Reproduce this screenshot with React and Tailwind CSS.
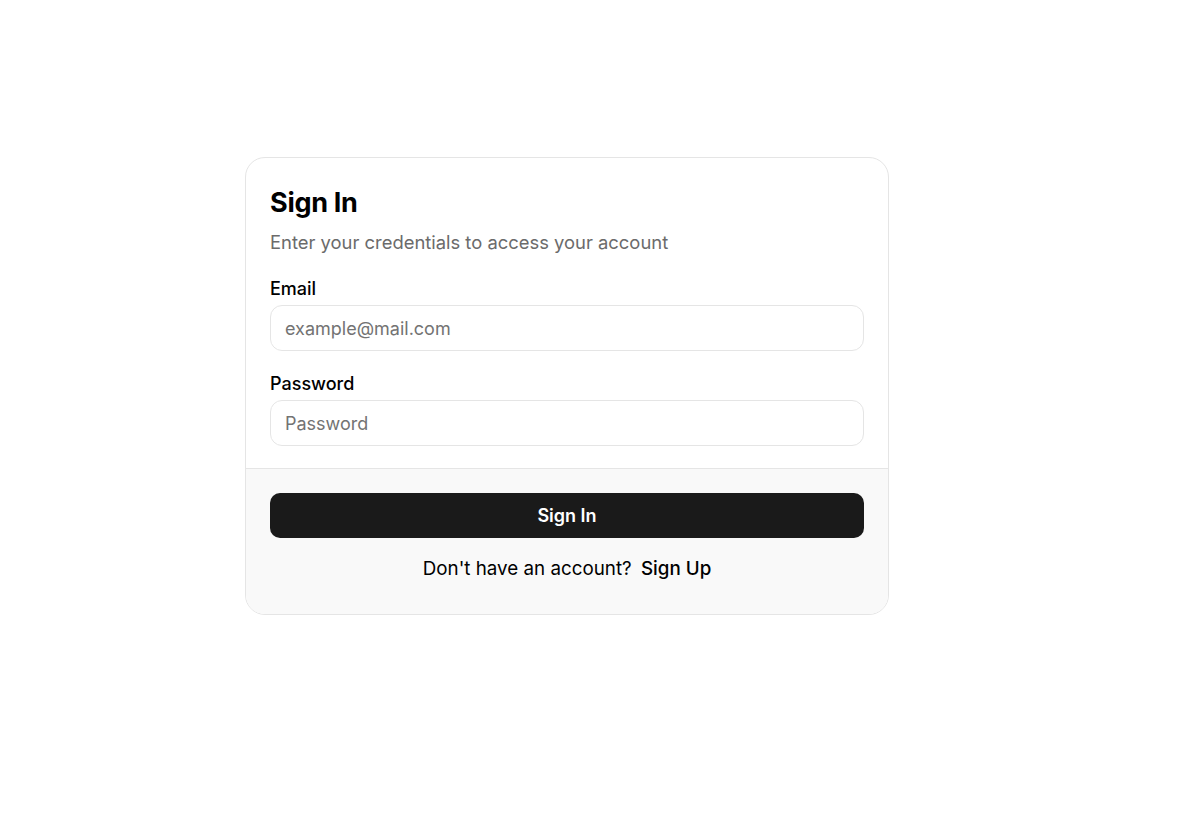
import React, { useState } from "react";

const App = () => {
  const [email, setEmail] = useState("");
  const [password, setPassword] = useState("");

  const handleSubmit = (e) => {
    e.preventDefault();
  };

  return (
    <div
      className="min-h-screen bg-white pt-[157px] pl-[245px]"
      style={{ fontFamily: "Inter, 'Noto Sans', sans-serif" }}
    >
      <form
        onSubmit={handleSubmit}
        className="w-[644px] bg-white border border-[#e5e5e5] rounded-[20px] overflow-hidden"
      >
        <div className="px-6 pt-[27px] pb-[22px]">
          <h2 className="text-[27px] leading-[36px] font-bold tracking-[-0.3px] text-black">Sign In</h2>
          <p className="mt-[7px] text-[18.4px] leading-[28px] text-[#6b6b6b]">
            Enter your credentials to access your account
          </p>

          <label className="block mt-[19px] text-[18px] leading-[28px] font-medium text-black">
            Email
          </label>
          <input
            type="email"
            value={email}
            onChange={(e) => setEmail(e.target.value)}
            placeholder="example@mail.com"
            className="mt-[2px] w-full h-[46px] px-[14px] text-[18px] border border-[#e5e5e5] rounded-[12px] placeholder:text-[#737373] focus:outline-none"
          />

          <label className="block mt-[19px] text-[18px] leading-[28px] font-medium text-black">
            Password
          </label>
          <input
            type="password"
            value={password}
            onChange={(e) => setPassword(e.target.value)}
            placeholder="Password"
            className="mt-[2px] w-full h-[46px] px-[14px] text-[18px] border border-[#e5e5e5] rounded-[12px] placeholder:text-[#737373] focus:outline-none"
          />
        </div>

        <div className="border-t border-[#e5e5e5] bg-[#f9f9f9] px-6 pt-6 pb-[31px]">
          <button
            type="submit"
            className="w-full h-[45px] bg-[#1a1a1a] text-white text-[18px] font-semibold rounded-[10px]"
          >
            Sign In
          </button>
          <p className="mt-[17px] text-center text-[18.8px] leading-[28px] text-black">
            Don't have an account?{" "}
            <a href="#" className="ml-1 font-medium">
              Sign Up
            </a>
          </p>
        </div>
      </form>
    </div>
  );
};

export default App;
